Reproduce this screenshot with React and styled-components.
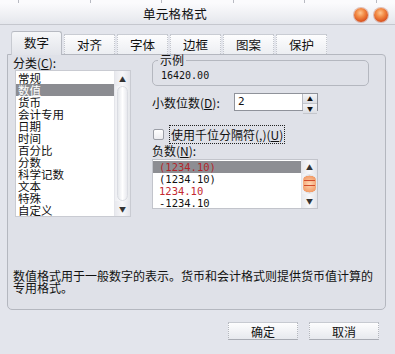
import React from 'react'
import styled, { createGlobalStyle, css } from 'styled-components'

const GlobalStyle = createGlobalStyle`
  html, body { margin: 0; padding: 0; }
  body {
    background: #e3e5ec;
    font-family: "Noto Sans CJK SC", "Noto Sans", sans-serif;
    font-size: 12px;
    color: #111;
  }
`

const categories = ['常规', '数值', '货币', '会计专用', '日期', '时间', '百分比', '分数', '科学记数', '文本', '特殊', '自定义']
const negatives = [
  { text: '(1234.10)', red: true },
  { text: '(1234.10)', red: false },
  { text: '1234.10', red: true },
  { text: '-1234.10', red: false },
]
const tabs = ['数字', '对齐', '字体', '边框', '图案', '保护']

const App = () => {
  return (
    <Window>
      <GlobalStyle />
      <TopStrip>
        {[0, 1, 2, 3, 4, 5].map(i => <Tick key={i} />)}
      </TopStrip>
      <TitleBar>
        <Title>单元格格式</Title>
        <Circles>
          <Circle />
          <Circle />
        </Circles>
      </TitleBar>

      <Tabs>
        {tabs.map((t, i) => (
          <Tab key={t} active={i === 0}>{t}</Tab>
        ))}
      </Tabs>

      <Panel>
        <Columns>
          <LeftCol>
            <Label>分类(<U>C</U>):</Label>
            <ListBox>
              <Items>
                {categories.map((c, i) => (
                  <Item key={c} selected={i === 1}>{c}</Item>
                ))}
              </Items>
              <ScrollBar>
                <Arrow>▲</Arrow>
                <Track />
                <Arrow>▼</Arrow>
              </ScrollBar>
            </ListBox>
          </LeftCol>

          <RightCol>
            <Sample>
              <Legend>示例</Legend>
              <SampleValue>16420.00</SampleValue>
            </Sample>

            <SpinRow>
              <Label>小数位数(<U>D</U>):</Label>
              <Spin>
                <SpinValue>2</SpinValue>
                <SpinButtons>
                  <SpinBtn>▲</SpinBtn>
                  <SpinBtn>▼</SpinBtn>
                </SpinButtons>
              </Spin>
            </SpinRow>

            <CheckRow>
              <CheckBox />
              <Focus>使用千位分隔符(,)(<U>U</U>)</Focus>
            </CheckRow>

            <Label>负数(<U>N</U>):</Label>
            <NegList>
              <Items>
                {negatives.map((n, i) => (
                  <NegItem key={i} red={n.red} selected={i === 0}>{n.text}</NegItem>
                ))}
              </Items>
              <SmallScroll>
                <Arrow>▲</Arrow>
                <Thumb />
                <Arrow>▼</Arrow>
              </SmallScroll>
            </NegList>
          </RightCol>
        </Columns>

        <Description>
          数值格式用于一般数字的表示。货币和会计格式则提供货币值计算的专用格式。
        </Description>
      </Panel>

      <Footer>
        <Button>确定</Button>
        <Button>取消</Button>
      </Footer>
    </Window>
  )
}

export default App

const Window = styled.div`
  width: 395px;
  height: 354px;
  overflow: hidden;
  background: #e3e5ec;
  display: flex;
  flex-direction: column;
`

const TopStrip = styled.div`
  height: 3px;
  background: #fbfbfd;
  display: flex;
  justify-content: space-between;
  padding: 0 18px;
`

const Tick = styled.div`
  width: 1px;
  background: #b8bac2;
`

const TitleBar = styled.div`
  height: 21px;
  display: flex;
  align-items: center;
  background: linear-gradient(#fbfbfd, #eeeff3 60%, #e4e6ec);
  border-bottom: 1px solid #c5c7ce;
`

const Title = styled.div`
  margin-left: 143px;
  font-size: 12.5px;
  letter-spacing: 0.3px;
  color: #111;
`

const Circles = styled.div`
  margin-left: auto;
  margin-right: 7px;
  margin-top: 3px;
  display: flex;
  gap: 6px;
`

const Circle = styled.div`
  width: 14px;
  height: 14px;
  border-radius: 50%;
  background: radial-gradient(circle at 45% 35%, #ffc58f 0%, #f28a45 35%, #d9501d 75%, #b8441f 100%);
  box-shadow: 0 0 0 1px rgba(180, 90, 60, 0.35);
`

const Tabs = styled.div`
  height: 23px;
  margin-top: 6px;
  padding-left: 11px;
  display: flex;
  align-items: flex-end;
  gap: 2px;
`

const Tab = styled.div`
  width: 51px;
  height: 20px;
  display: flex;
  align-items: center;
  justify-content: center;
  font-size: 12.5px;
  background: linear-gradient(#fdfdfe, #eceef2);
  border-top: 1px solid #c9ccd3;
  border-left: 1px dotted #c3c6cd;
  border-right: 1px dotted #c3c6cd;
  box-sizing: border-box;
  ${p => p.active && css`
    height: 24px;
    margin-bottom: -1px;
    background: linear-gradient(#f6f7f9, #e2e4ea);
    border-top: 1px solid #b7bac2;
    border-left: 1px solid #c7cad1;
    border-right: 1px solid #b7bac2;
    border-radius: 3px 3px 0 0;
    position: relative;
    z-index: 1;
    padding-bottom: 3px;
  `}
`

const Panel = styled.div`
  margin: 0 9px 0 7px;
  height: 256px;
  box-sizing: border-box;
  border: 1px solid #b4b7bf;
  border-radius: 0 4px 5px 5px;
  background: #dfe1e8;
  padding: 1px 0 0 5px;
  display: flex;
  flex-direction: column;
`

const Columns = styled.div`
  display: flex;
`

const LeftCol = styled.div`
  width: 133px;
  display: flex;
  flex-direction: column;
`

const Label = styled.div`
  font-size: 12px;
  line-height: 13px;
  color: #111;
`

const U = styled.span`
  text-decoration: underline;
`

const ListBox = styled.div`
  margin: 1px 0 0 2px;
  width: 116px;
  height: 147px;
  box-sizing: border-box;
  background: #fff;
  border: 1px solid #c9cbd2;
  display: flex;
`

const Items = styled.div`
  flex: 1;
  padding-top: 1px;
`

const Item = styled.div`
  height: 12px;
  line-height: 12px;
  padding-left: 2px;
  font-size: 11.5px;
  ${p => p.selected && css`
    background: #8b8c91;
    color: #fff;
  `}
`

const ScrollBar = styled.div`
  width: 15px;
  display: flex;
  flex-direction: column;
  border-left: 1px solid #e4e5ea;
  background: linear-gradient(90deg, #eeeff3, #fafafc 50%, #e4e6ea);
`

const Arrow = styled.div`
  height: 15px;
  display: flex;
  align-items: center;
  justify-content: center;
  font-size: 7px;
  color: #333;
  background: linear-gradient(90deg, #e8e9ee, #f7f7f9 50%, #e3e4ea);
`

const Track = styled.div`
  flex: 1;
  margin: 0 2px;
  border-radius: 6px;
  background: linear-gradient(90deg, #e6e8ec, #ffffff 50%, #e8e9ee);
  border: 1px solid #dadce2;
`

const RightCol = styled.div`
  margin-left: 6px;
  width: 217px;
  display: flex;
  flex-direction: column;
`

const Sample = styled.fieldset`
  margin: -2px 0 0;
  padding: 0 0 0 8px;
  height: 32px;
  box-sizing: border-box;
  border: 1px solid #b4b7bf;
  border-radius: 5px;
`

const Legend = styled.legend`
  padding: 0 2px;
  margin-left: -3px;
  font-size: 12px;
  line-height: 12px;
`

const SampleValue = styled.div`
  font-family: "DejaVu Sans Mono", monospace;
  font-size: 10px;
  line-height: 12px;
  margin-top: 4px;
`

const SpinRow = styled.div`
  display: flex;
  align-items: center;
  margin-top: 7px;
  ${Label} { width: 82px; }
`

const Spin = styled.div`
  width: 84px;
  height: 18px;
  box-sizing: border-box;
  border: 1px solid #8f929a;
  background: #fff;
  display: flex;
`

const SpinValue = styled.div`
  flex: 1;
  padding-left: 3px;
  font-family: "DejaVu Sans Mono", monospace;
  font-size: 11px;
  line-height: 16px;
`

const SpinButtons = styled.div`
  width: 14px;
  display: flex;
  flex-direction: column;
  border-left: 1px solid #b8bbc3;
`

const SpinBtn = styled.div`
  flex: 1;
  display: flex;
  align-items: center;
  justify-content: center;
  font-size: 6px;
  color: #111;
  background: linear-gradient(#f4f5f7, #dcdee4);
  border-bottom: 1px solid #c4c6cc;
`

const CheckRow = styled.div`
  display: flex;
  align-items: center;
  margin-top: 14px;
  margin-left: 1px;
`

const CheckBox = styled.div`
  width: 9px;
  height: 9px;
  border: 1px solid #9a9da5;
  border-radius: 2px;
  background: linear-gradient(#fff, #ececf0);
  margin-right: 5px;
`

const Focus = styled.div`
  border: 1px dotted #222;
  padding: 2px 1px;
  font-size: 12px;
  line-height: 13px;
`

const NegList = styled.div`
  margin-top: 2px;
  width: 166px;
  height: 50px;
  box-sizing: border-box;
  border: 1px solid #c2c4cb;
  background: #fff;
  display: flex;
`

const NegItem = styled.div`
  height: 12px;
  line-height: 12px;
  padding-left: 6px;
  font-family: "DejaVu Sans Mono", monospace;
  font-size: 10.5px;
  color: ${p => (p.red ? '#c42a2f' : '#111')};
  ${p => p.selected && css`
    background: #8d8e93;
    color: #b2262b;
  `}
`

const SmallScroll = styled(ScrollBar)`
  ${Arrow} { height: 14px; }
`

const Thumb = styled.div`
  flex: 1;
  margin: 0 1px;
  border-radius: 7px;
  background:
    linear-gradient(#d24c2c, #d24c2c) center 6px / 11px 1px no-repeat,
    linear-gradient(#d24c2c, #d24c2c) center 11px / 11px 1px no-repeat,
    radial-gradient(circle, #ffd7b5, #f19a66 70%, #e4e6ea 72%);
`

const Description = styled.div`
  margin-top: 53px;
  font-size: 12px;
  line-height: 12px;
  width: 364px;
`

const Footer = styled.div`
  display: flex;
  justify-content: flex-end;
  gap: 11px;
  padding-right: 16px;
  margin-top: 12px;
`

const Button = styled.div`
  width: 70px;
  height: 18px;
  box-sizing: border-box;
  display: flex;
  align-items: center;
  justify-content: center;
  font-size: 12px;
  background: linear-gradient(#fdfdfe, #e7e9ee);
  border: 1px dotted #b3b6bd;
  border-top: 1px solid #c7cad1;
  border-bottom: 1px solid #a9acb4;
`
